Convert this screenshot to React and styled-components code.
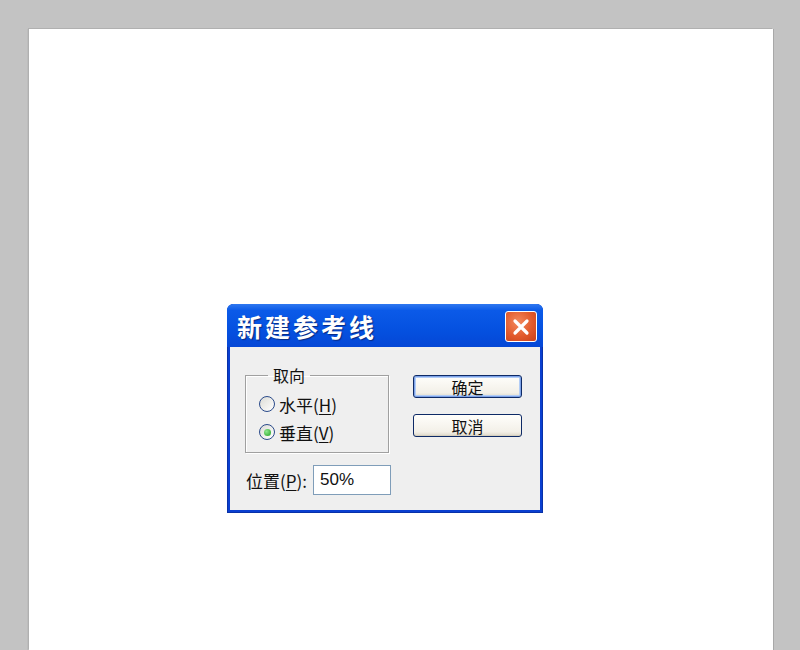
import React from 'react'
import styled, { createGlobalStyle } from 'styled-components'

const Global = createGlobalStyle`
    html, body {
        margin: 0;
        padding: 0;
        background: #c3c3c3;
        font-family: "Liberation Sans", "Noto Sans CJK SC", sans-serif;
    }
`

const Page = styled.div`
    width: 800px;
    height: 650px;
    padding: 29px 0 0 29px;
    box-sizing: border-box;
    overflow: hidden;
`

const Canvas = styled.div`
    width: 744px;
    height: 621px;
    background: #ffffff;
    box-shadow: -1px -1px 0 #b0b0b0, 1px 0 0 #a8a8a8, -2px 0 0 #bcbcbc;
    padding: 275px 0 0 198px;
    box-sizing: border-box;
`

const Dialog = styled.div`
    width: 316px;
    height: 209px;
    background: #0a3fd0;
    border-radius: 7px 7px 0 0;
    padding: 0 3px 3px 3px;
    box-sizing: border-box;
    display: flex;
    flex-direction: column;
    box-shadow: inset 0 0 0 1px #0831a8;
`

const TitleBar = styled.div`
    height: 43px;
    display: flex;
    align-items: center;
    justify-content: space-between;
    background: linear-gradient(#2f78f0 0%, #0b5ae8 15%, #0551e0 60%, #0547d6 100%);
    border-radius: 6px 6px 0 0;
    margin: 0 -3px;
    padding-left: 10px;
    padding-right: 6px;
`

const Title = styled.div`
    color: #ffffff;
    font-family: "Noto Sans CJK SC", sans-serif;
    font-weight: 700;
    font-size: 25px;
    letter-spacing: 3px;
    text-shadow: 1px 1px 1px #0a2a80;
`

const CloseBtn = styled.div`
    width: 32px;
    height: 31px;
    box-sizing: border-box;
    border: 1px solid #ffffff;
    border-radius: 3px;
    background: radial-gradient(circle at 40% 35%, #f38a5e 0%, #e25a2c 55%, #c8401a 100%);
    display: flex;
    align-items: center;
    justify-content: center;
    margin-top: 2px;
`

const Body = styled.div`
    flex: 1;
    background: #efefef;
    padding: 28px 18px 0 15px;
    display: flex;
    flex-direction: column;
    gap: 13px;
`

const TopRow = styled.div`
    display: flex;
    justify-content: space-between;
`

const Group = styled.fieldset`
    margin: 0;
    width: 144px;
    height: 86px;
    box-sizing: border-box;
    border: 1px solid #a0a0a0;
    box-shadow: 1px 1px 0 #ffffff, inset 1px 1px 0 #ffffff;
    padding: 0 0 0 13px;
    display: flex;
    flex-direction: column;
    gap: 8px;
    position: relative;
    top: -8px;
`

const Legend = styled.legend`
    font-size: 16px;
    color: #111;
    padding: 0 5px;
    margin-left: 9px;
    line-height: 16px;
    font-family: "Noto Sans CJK SC", sans-serif;
`

const RadioRow = styled.div`
    display: flex;
    align-items: center;
    gap: 4px;
    font-size: 17px;
    color: #111;
    font-family: "Noto Sans CJK SC", sans-serif;
    height: 20px;
    margin-top: ${p => p.$first ? '11px' : '0'};
`

const Radio = styled.span`
    width: 16px;
    height: 16px;
    box-sizing: border-box;
    border-radius: 50%;
    border: 1px solid #2a4a8a;
    background: linear-gradient(135deg, #dcdcd6, #ffffff);
    display: flex;
    align-items: center;
    justify-content: center;
    flex-shrink: 0;
    &::after {
        content: '';
        width: 7px;
        height: 7px;
        border-radius: 50%;
        background: ${p => p.$checked ? 'radial-gradient(circle at 35% 35%, #8ee88e, #21a121)' : 'transparent'};
    }
`

const U = styled.span`
    text-decoration: underline;
    text-underline-offset: 2px;
`

const Buttons = styled.div`
    display: flex;
    flex-direction: column;
    gap: 16px;
`

const Button = styled.div`
    width: 109px;
    height: 23px;
    box-sizing: border-box;
    border: 1px solid #0e2a66;
    border-radius: 3px;
    background: linear-gradient(#fffefb, #f3f0e8 80%, #dcd7c8);
    box-shadow: ${p => p.$default ? 'inset 0 0 0 1px #7da2e8, inset 0 0 0 2px #b3cdf6' : 'inset 0 -1px 0 #d6d0bf'};
    display: flex;
    align-items: center;
    justify-content: center;
    font-size: 16px;
    color: #111;
    font-family: "Noto Sans CJK SC", sans-serif;
`

const FieldRow = styled.div`
    display: flex;
    align-items: center;
    gap: 6px;
    margin-left: 1px;
    margin-top: -9px;
`

const Label = styled.span`
    font-size: 17px;
    color: #111;
    font-family: "Noto Sans CJK SC", sans-serif;
`

const Input = styled.div`
    width: 78px;
    height: 30px;
    box-sizing: border-box;
    border: 1px solid #7f9db9;
    background: #fff;
    display: flex;
    align-items: center;
    padding-left: 6px;
    font-size: 17px;
    color: #111;
    font-family: "Liberation Sans", sans-serif;
`

export default function App() {
    return (
        <Page>
            <Global />
            <Canvas>
                <Dialog>
                    <TitleBar>
                        <Title>新建参考线</Title>
                        <CloseBtn>
                            <svg width="20" height="20" viewBox="0 0 20 20">
                                <path d="M4 4 L16 16 M16 4 L4 16" stroke="#fff" strokeWidth="3.2" strokeLinecap="round" />
                            </svg>
                        </CloseBtn>
                    </TitleBar>
                    <Body>
                        <TopRow>
                            <Group>
                                <Legend>取向</Legend>
                                <RadioRow $first>
                                    <Radio />
                                    <span>水平(<U>H</U>)</span>
                                </RadioRow>
                                <RadioRow>
                                    <Radio $checked />
                                    <span>垂直(<U>V</U>)</span>
                                </RadioRow>
                            </Group>
                            <Buttons>
                                <Button $default>确定</Button>
                                <Button>取消</Button>
                            </Buttons>
                        </TopRow>
                        <FieldRow>
                            <Label>位置(<U>P</U>):</Label>
                            <Input>50%</Input>
                        </FieldRow>
                    </Body>
                </Dialog>
            </Canvas>
        </Page>
    )
}
